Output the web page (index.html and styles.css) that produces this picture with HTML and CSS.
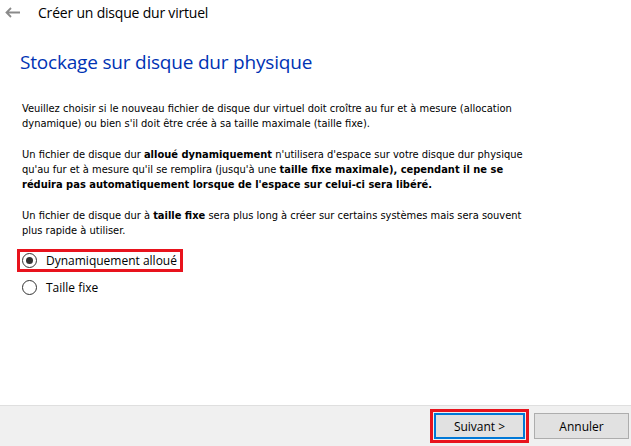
FILE: index.html
```html
<!DOCTYPE html>
<html lang="fr">
<head>
<meta charset="utf-8">
<link rel="stylesheet" href="styles.css">
</head>
<body>
<div class="window">
  <header class="titlebar">
    <svg class="back" width="15" height="11" viewBox="0 0 15 11"><path d="M6 1 L1.5 5.5 L6 10 M1.5 5.5 H15" fill="none" stroke="#8a8a8a" stroke-width="1.8"/></svg>
    <span class="title">Créer un disque dur virtuel</span>
  </header>
  <main class="content">
    <h1 class="heading">Stockage sur disque dur physique</h1>
    <div class="body">
      <p>Veuillez choisir si le nouveau fichier de disque dur virtuel doit croître au fur et à mesure (allocation<br>dynamique) ou bien s'il doit être crée à sa taille maximale (taille fixe).</p>
      <p>Un fichier de disque dur <b>alloué dynamiquement</b> n'utilisera d'espace sur votre disque dur physique<br>qu'au fur et à mesure qu'il se remplira (jusqu'à une <b>taille fixe maximale), cependant il ne se<br>réduira pas automatiquement lorsque de l'espace sur celui-ci sera libéré.</b></p>
      <p>Un fichier de disque dur à <b>taille fixe</b> sera plus long à créer sur certains systèmes mais sera souvent<br>plus rapide à utiliser.</p>
    </div>
    <div class="options">
      <label class="option highlight"><span class="radio checked"></span>Dynamiquement alloué</label>
      <label class="option"><span class="radio"></span>Taille fixe</label>
    </div>
  </main>
  <footer class="footer">
    <button class="btn primary">Suivant &gt;</button>
    <button class="btn">Annuler</button>
  </footer>
</div>
</body>
</html>
```
FILE: styles.css
```css
html, body { margin: 0; padding: 0; }
body { background: #fff; width: 631px; height: 446px; overflow: hidden; }
.window { display: flex; flex-direction: column; height: 446px; }
.titlebar { display: flex; align-items: center; height: 25px; padding-left: 5px; font-family: "Open Sans", "Noto Sans", sans-serif; font-size: 14px; color: #000; }
.back { display: block; }
.title { margin-left: 18px; letter-spacing: -0.2px; }
.content { flex: 1; padding: 0 0 0 22px; }
.heading { margin: 24px 0 0 -2px; font-family: "Open Sans", "Noto Sans", sans-serif; font-weight: 400; font-size: 19px; line-height: 26px; color: #0033b4; letter-spacing: -0.2px; }
.body { margin-top: 26px; width: 605px; font-family: "Liberation Sans Narrow", "DejaVu Sans Condensed", sans-serif; font-size: 11px; line-height: 15px; color: #000; white-space: nowrap; }
.body p { margin: 0 0 16px 0; }
.body b { font-weight: 700; }
.options { display: flex; flex-direction: column; align-items: flex-start; margin-left: -5px; margin-top: -5px; gap: 4px; }
.option { display: inline-flex; align-items: center; gap: 9px; height: 17px; padding: 0 3px 0 2px; font-family: "Open Sans", "Noto Sans", sans-serif; font-size: 12px; color: #000; border: 3px solid transparent; }
.option.highlight { border-color: #e8131d; }
.radio { width: 13px; height: 13px; border: 1px solid #333; border-radius: 50%; display: flex; align-items: center; justify-content: center; background: #fff; }
.radio.checked::after { content: ""; width: 7px; height: 7px; border-radius: 50%; background: #333; }
.footer { height: 40px; border-top: 1px solid #dfdfdf; background: #f0f0f0; display: flex; align-items: center; justify-content: flex-end; gap: 9px; padding-right: 2px; }
.btn { height: 26px; width: 95px; box-sizing: border-box; border: 1px solid #adadad; background: #e1e1e1; font-family: "Open Sans", "Noto Sans", sans-serif; font-size: 12px; color: #000; padding: 0; }
.btn.primary { width: 91px; border: 2px solid #0078d7; outline: 3px solid #e8131d; outline-offset: 1px; }
```
